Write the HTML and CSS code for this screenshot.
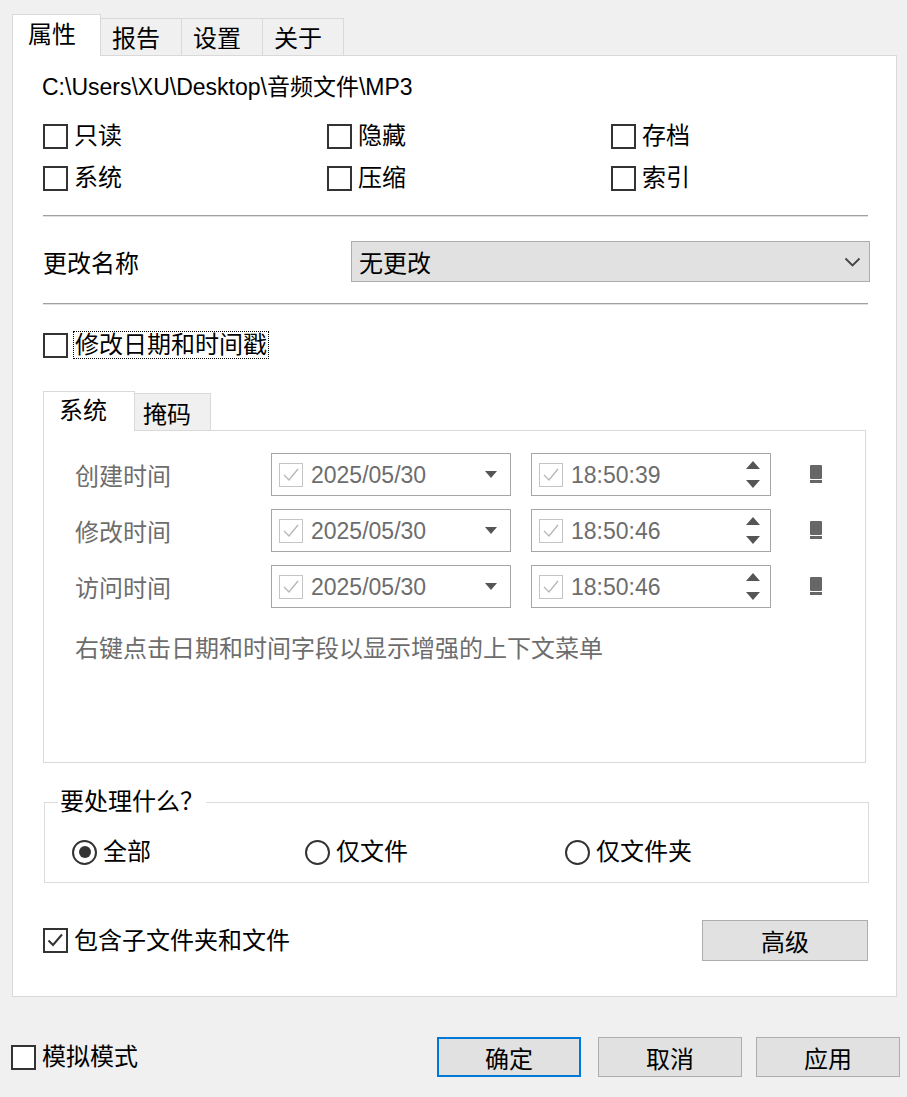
FILE: index.html
```html
<!DOCTYPE html>
<html lang="zh-CN">
<head>
<meta charset="utf-8">
<title>属性</title>
<link rel="stylesheet" href="styles.css">
</head>
<body>
<div class="window">
  <div class="tabs">
    <div class="tab active">属性</div>
    <div class="tab">报告</div>
    <div class="tab">设置</div>
    <div class="tab">关于</div>
  </div>
  <div class="panel">
    <div class="path">C:\Users\XU\Desktop\音频文件\MP3</div>
    <div class="attrs">
      <div class="cb"><span class="box"></span><span>只读</span></div>
      <div class="cb"><span class="box"></span><span>隐藏</span></div>
      <div class="cb"><span class="box"></span><span>存档</span></div>
      <div class="cb"><span class="box"></span><span>系统</span></div>
      <div class="cb"><span class="box"></span><span>压缩</span></div>
      <div class="cb"><span class="box"></span><span>索引</span></div>
    </div>
    <div class="sep"></div>
    <div class="rename">
      <span class="rename-label">更改名称</span>
      <div class="combo">
        <span>无更改</span>
        <svg class="chev" width="17" height="10" viewBox="0 0 17 10"><polyline points="1.5,1.5 8.5,8.5 15.5,1.5" fill="none" stroke="#444" stroke-width="1.8"/></svg>
      </div>
    </div>
    <div class="sep sep-b"></div>
    <div class="ts">
      <span class="box"></span>
      <span class="focus">修改日期和时间戳</span>
    </div>
    <div class="itabs">
      <div class="itab active">系统</div>
      <div class="itab">掩码</div>
    </div>
    <div class="ipanel">
      <div class="trow">
        <span class="tlabel">创建时间</span>
        <div class="picker">
          <span class="mini"><svg width="22" height="22" viewBox="0 0 22 22"><polyline points="4,11 9,16 18,5" fill="none" stroke="#b8b8b8" stroke-width="1.4"/></svg></span>
          <span class="val">2025/05/30</span>
          <svg width="12" height="7" viewBox="0 0 12 7"><polygon points="0,0 12,0 6,7" fill="#555"/></svg>
        </div>
        <div class="picker time">
          <span class="mini"><svg width="22" height="22" viewBox="0 0 22 22"><polyline points="4,11 9,16 18,5" fill="none" stroke="#b8b8b8" stroke-width="1.4"/></svg></span>
          <span class="val">18:50:39</span>
          <svg width="14" height="27" viewBox="0 0 14 27"><polygon points="7,0 14,8 0,8" fill="#555"/><polygon points="0,19 14,19 7,27" fill="#555"/></svg>
        </div>
        <svg class="clear" width="12" height="19" viewBox="0 0 12 19"><rect x="0" y="0" width="12" height="14" rx="1" fill="#666"/><rect x="0" y="15" width="12" height="3" fill="#666"/></svg>
      </div>
      <div class="trow">
        <span class="tlabel">修改时间</span>
        <div class="picker">
          <span class="mini"><svg width="22" height="22" viewBox="0 0 22 22"><polyline points="4,11 9,16 18,5" fill="none" stroke="#b8b8b8" stroke-width="1.4"/></svg></span>
          <span class="val">2025/05/30</span>
          <svg width="12" height="7" viewBox="0 0 12 7"><polygon points="0,0 12,0 6,7" fill="#555"/></svg>
        </div>
        <div class="picker time">
          <span class="mini"><svg width="22" height="22" viewBox="0 0 22 22"><polyline points="4,11 9,16 18,5" fill="none" stroke="#b8b8b8" stroke-width="1.4"/></svg></span>
          <span class="val">18:50:46</span>
          <svg width="14" height="27" viewBox="0 0 14 27"><polygon points="7,0 14,8 0,8" fill="#555"/><polygon points="0,19 14,19 7,27" fill="#555"/></svg>
        </div>
        <svg class="clear" width="12" height="19" viewBox="0 0 12 19"><rect x="0" y="0" width="12" height="14" rx="1" fill="#666"/><rect x="0" y="15" width="12" height="3" fill="#666"/></svg>
      </div>
      <div class="trow">
        <span class="tlabel">访问时间</span>
        <div class="picker">
          <span class="mini"><svg width="22" height="22" viewBox="0 0 22 22"><polyline points="4,11 9,16 18,5" fill="none" stroke="#b8b8b8" stroke-width="1.4"/></svg></span>
          <span class="val">2025/05/30</span>
          <svg width="12" height="7" viewBox="0 0 12 7"><polygon points="0,0 12,0 6,7" fill="#555"/></svg>
        </div>
        <div class="picker time">
          <span class="mini"><svg width="22" height="22" viewBox="0 0 22 22"><polyline points="4,11 9,16 18,5" fill="none" stroke="#b8b8b8" stroke-width="1.4"/></svg></span>
          <span class="val">18:50:46</span>
          <svg width="14" height="27" viewBox="0 0 14 27"><polygon points="7,0 14,8 0,8" fill="#555"/><polygon points="0,19 14,19 7,27" fill="#555"/></svg>
        </div>
        <svg class="clear" width="12" height="19" viewBox="0 0 12 19"><rect x="0" y="0" width="12" height="14" rx="1" fill="#666"/><rect x="0" y="15" width="12" height="3" fill="#666"/></svg>
      </div>
      <div class="hint">右键点击日期和时间字段以显示增强的上下文菜单</div>
    </div>
    <fieldset class="group">
      <legend>要处理什么？</legend>
      <div class="radios">
        <div class="rb"><span class="circle on"></span><span>全部</span></div>
        <div class="rb"><span class="circle"></span><span>仅文件</span></div>
        <div class="rb"><span class="circle"></span><span>仅文件夹</span></div>
      </div>
    </fieldset>
    <div class="include">
      <div class="cb"><span class="box"><svg width="21" height="21" viewBox="0 0 21 21"><polyline points="3.5,10.5 8,15 17,4.5" fill="none" stroke="#333" stroke-width="2"/></svg></span><span>包含子文件夹和文件</span></div>
      <div class="btn adv">高级</div>
    </div>
  </div>
  <div class="footer">
    <div class="cb"><span class="box"></span><span>模拟模式</span></div>
    <div class="buttons">
      <div class="btn default">确定</div>
      <div class="btn cancel">取消</div>
      <div class="btn">应用</div>
    </div>
  </div>
</div>
</body>
</html>
```
FILE: styles.css
```css
* { box-sizing: border-box; }
html, body { margin: 0; padding: 0; }
body {
  width: 907px;
  height: 1097px;
  overflow: hidden;
  background: #f0f0f0;
  color: #000;
  font-family: "Liberation Sans", "Noto Sans CJK SC", sans-serif;
  font-size: 24px;
}
.window { padding: 14px 10px 0 12px; }

/* top tabs */
.tabs {
  display: flex;
  align-items: flex-end;
  height: 42px;
  margin-bottom: -1px;
  position: relative;
  z-index: 1;
}
.tab {
  height: 37px;
  margin-bottom: 1px;
  padding: 2px 21px 0 11px;
  line-height: 36px;
  background: #f0f0f0;
  border-top: 1px solid #d9d9d9;
  border-right: 1px solid #d9d9d9;
}
.tab.active {
  height: 42px;
  margin-bottom: 0;
  padding: 0 24px 0 15px;
  line-height: 40px;
  background: #fff;
  border-left: 1px solid #d9d9d9;
}

.panel {
  width: 885px;
  height: 942px;
  background: #fff;
  border: 1px solid #d9d9d9;
  padding: 0 28px 0 30px;
}
.path {
  margin: 17px 0 0 -1px;
  line-height: 28px;
  font-size: 23px;
}
.attrs {
  display: grid;
  grid-template-columns: 284px 284px 1fr;
  grid-auto-rows: 42px;
  margin-top: 14px;
}
.cb {
  display: flex;
  align-items: center;
  gap: 6px;
  line-height: 28px;
}
.box {
  width: 25px;
  height: 25px;
  flex: none;
  border: 2px solid #333;
  background: #fff;
  display: flex;
  align-items: center;
  justify-content: center;
}
.sep {
  margin-top: 16px;
  height: 2px;
  border-top: 1px solid #a0a0a0;
  border-bottom: 1px solid #e0e0e0;
}
.sep-b { margin-top: 21px; }

.rename {
  display: flex;
  align-items: center;
  height: 41px;
  margin-top: 24px;
}
.rename-label { width: 308px; flex: none; }
.combo {
  flex: 1;
  height: 41px;
  margin-right: -2px;
  display: flex;
  align-items: center;
  justify-content: space-between;
  padding: 0 8px 0 7px;
  background: #e1e1e1;
  border: 1px solid #adadad;
}

.ts {
  display: flex;
  align-items: center;
  gap: 5px;
  height: 28px;
  margin-top: 26px;
}
.focus {
  border: 1px dotted #000;
  line-height: 26px;
  padding: 0 1px;
}

/* inner tabs */
.itabs {
  display: flex;
  align-items: flex-end;
  height: 40px;
  margin-top: 32px;
  margin-bottom: -1px;
  position: relative;
  z-index: 1;
}
.itab {
  height: 37px;
  margin-bottom: 1px;
  padding: 3px 19px 0 8px;
  line-height: 36px;
  background: #f0f0f0;
  border-top: 1px solid #d9d9d9;
  border-right: 1px solid #d9d9d9;
}
.itab.active {
  height: 40px;
  margin-bottom: 0;
  padding: 0 27px 0 15px;
  line-height: 38px;
  background: #fff;
  border-left: 1px solid #d9d9d9;
}
.ipanel {
  width: 823px;
  height: 333px;
  background: #fff;
  border: 1px solid #d9d9d9;
  padding: 22px 0 0 31px;
  color: #6d6d6d;
}
.trow {
  display: flex;
  align-items: center;
  height: 43px;
}
.trow + .trow { margin-top: 13px; }
.tlabel { width: 196px; flex: none; }
.picker {
  width: 240px;
  height: 43px;
  flex: none;
  display: flex;
  align-items: center;
  padding: 0 13px 0 7px;
  border: 1px solid #a6a6a6;
  background: #fff;
}
.picker.time { margin-left: 20px; padding-right: 10px; }
.mini {
  width: 24px;
  height: 24px;
  flex: none;
  border: 1px solid #c4c4c4;
  display: flex;
}
.val {
  flex: 1;
  margin-left: 8px;
  font-size: 23px;
  line-height: 28px;
  color: #6d6d6d;
}
.clear { margin-left: 39px; flex: none; }
.hint {
  margin-top: 27px;
  line-height: 28px;
}

/* group box */
.group {
  width: 825px;
  margin: 25px 0 0 1px;
  padding: 21px 0 15px 13px;
  border: 1px solid #dcdcdc;
  min-inline-size: 0;
}
.group legend {
  padding: 0 2px;
  line-height: 28px;
}
.radios {
  display: grid;
  grid-template-columns: 233px 260px 1fr;
  align-items: center;
  height: 30px;
  margin-left: 14px;
}
.rb {
  display: flex;
  align-items: center;
  gap: 6px;
  line-height: 28px;
}
.circle {
  width: 25px;
  height: 25px;
  flex: none;
  border: 2px solid #333;
  border-radius: 50%;
  background: #fff;
  display: flex;
  align-items: center;
  justify-content: center;
}
.circle.on::after {
  content: "";
  width: 12px;
  height: 12px;
  border-radius: 50%;
  background: #333;
}

.include {
  display: flex;
  align-items: center;
  justify-content: space-between;
  height: 41px;
  margin-top: 37px;
}
.btn {
  height: 41px;
  display: flex;
  align-items: center;
  justify-content: center;
  background: #e1e1e1;
  border: 1px solid #adadad;
}
.adv { width: 166px; }

.footer {
  display: flex;
  align-items: center;
  justify-content: space-between;
  height: 40px;
  margin: 40px -3px 0 -1px;
}
.buttons { display: flex; gap: 14px; }
.buttons .btn { width: 144px; height: 40px; }
.buttons .btn.default { border: 2px solid #0078d7; margin-right: 3px; }
```
